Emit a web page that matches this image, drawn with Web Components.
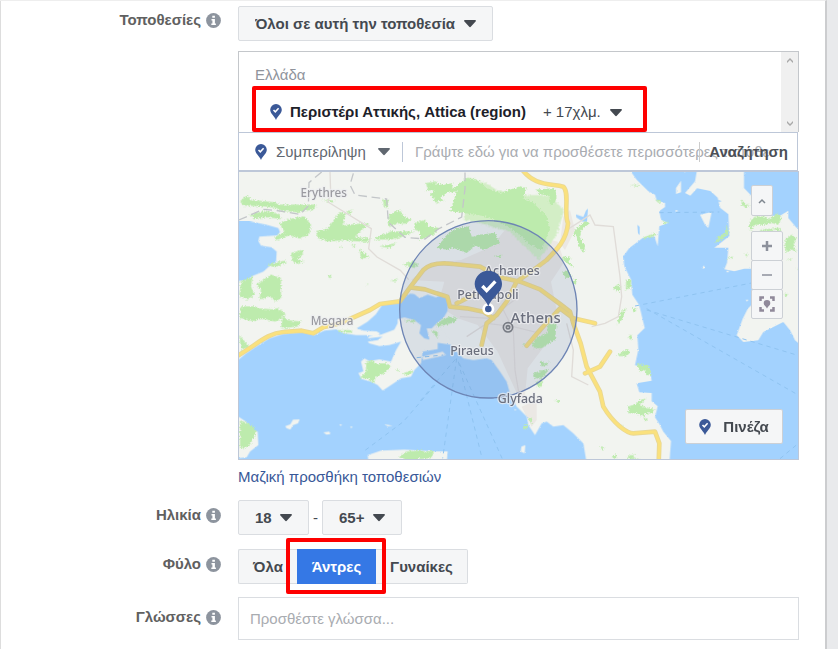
<!DOCTYPE html>
<html lang="el"><head><meta charset="utf-8"><title>Κοινό</title>
<style>
html{background:#e9eaec}
body{margin:0;min-height:100vh;font:15px/20px "Liberation Sans",Arial,sans-serif;color:#444950;overflow:hidden}
</style></head><body>
<audience-form></audience-form>
<script>
const define=(name,html,setup)=>{
  const t=document.createElement('template');t.innerHTML=html;
  customElements.define(name,class extends HTMLElement{
    constructor(){super();this.attachShadow({mode:'open'}).append(t.content.cloneNode(true));}
    connectedCallback(){if(setup)setup(this,this.shadowRoot);}
  });
};

define('pin-icon',`<style>:host{display:inline-flex;flex:none}</style>
<svg width="12" height="16" viewBox="0 0 12 16" aria-hidden="true"><path d="M6 0a5.8 5.8 0 0 1 5.8 5.8C11.8 9.500 8 11.500 6 16 4 11.500.2 9.500.2 5.800A5.800 5.800 0 0 1 6 0z" fill="#3b5998"/><path d="M3.500 5.900l1.800 1.900 3.300-3.600" fill="none" stroke="#fff" stroke-width="1.500"/></svg>`);

define('info-icon',`<style>:host{display:inline-flex;flex:none}</style>
<svg width="15" height="15" viewBox="0 0 15 15" role="img" aria-label="Πληροφορίες"><circle cx="7.500" cy="7.500" r="7.400" fill="#8d949e"/><path d="M6.300 2.700h2.600v2.100H6.300zM5.500 6h3.400v4.600h1v1.500H5.300v-1.500h1.100V7.400h-.9z" fill="#fff"/></svg>`);

define('form-row',`<style>
:host{display:grid;grid-template-columns:221px minmax(0,1fr);column-gap:17px;align-items:start}
.label{display:flex;justify-content:flex-end;align-items:center;gap:5px;font-weight:bold;color:#606060;padding-top:var(--label-top,5px)}
</style><div class="label"><slot name="label"></slot><info-icon></info-icon></div><div><slot></slot></div>`);

define('drop-down',`<style>
:host{display:inline-grid;align-items:center;background:var(--bg,#f5f6f7);border:var(--border,1px solid #dadde1);border-radius:2px;box-sizing:border-box;height:var(--height,35px)}
select{grid-area:1/1;appearance:none;border:0;background:none;margin:0;height:100%;font:inherit;font-weight:var(--weight,bold);color:inherit;padding:0 var(--right,36px) 0 var(--left,16px);outline-offset:-2px}
svg{grid-area:1/1;justify-self:end;margin-right:var(--arrow-right,15px);pointer-events:none}
</style><select></select><svg width="14" height="9" viewBox="0 0 14 9" aria-hidden="true"><path d="M1.800 1h10.400a.8.8 0 0 1 .6 1.300L8 7.600a1.300 1.300 0 0 1-2 0L1.200 2.300A.8.8 0 0 1 1.800 1z" fill="var(--arrow,#444950)"/></svg>`,(h,r)=>{
  const s=r.querySelector('select');s.setAttribute('aria-label',h.getAttribute('label'));
  s.replaceChildren(...h.getAttribute('options').split('|').map(o=>new Option(o)));
});

define('location-list',`<style>
:host{display:flex;border:1px solid #c4c7cb;border-bottom:0;height:80px;box-sizing:content-box}
.items{flex:1;min-width:0;padding:13px 0 0 16px}
.country{color:#90949c}
.place{position:relative;display:flex;align-items:center;width:max-content;margin-top:17px;padding-left:15px;gap:8px;height:20px;color:#1d2129}
.place strong{font-weight:bold}
drop-down{--bg:none;--border:0;--weight:normal;--height:24px;--left:9px;--right:30px;--arrow-right:8px;color:#444950}
.place::after{content:"";position:absolute;inset:-16px -16px -10px -3px;border:4px solid #fe0000;border-radius:2px;pointer-events:none}
.bar{display:flex;flex-direction:column;justify-content:space-between;align-items:center;width:17px;padding:5px 0;box-sizing:border-box;background:#f0f0f0}
</style>
<div class="items"><div class="country">Ελλάδα</div>
<div class="place"><pin-icon></pin-icon><strong>Περιστέρι Αττικής, Attica (region)</strong><drop-down label="Ακτίνα" options="+ 17χλμ."></drop-down></div></div>
<div class="bar" aria-hidden="true"><svg width="8" height="7"><path d="M1 6V4l3-3 3 3v2L4 3z" fill="#a9a9a9"/></svg><svg width="8" height="7"><path d="M1 1v2l3 3 3-3V1L4 4z" fill="#a9a9a9"/></svg></div>`);

define('location-search',`<style>
:host{display:flex;align-items:center;border:1px solid #bdc7d8;height:37px;margin-right:1px;padding-left:16px;background:#fff}
drop-down{--bg:none;--border:0;--weight:normal;--height:36px;--left:9px;--right:36px;--arrow-right:11px;--arrow:#606770;color:#606770}
.rule{width:1px;height:20px;background:#bdc7d8;flex:none}
.field{display:grid;flex:1;min-width:0;align-items:center}
input{grid-area:1/1;border:0;background:none;padding:0 10px 0 12px;min-width:0;height:36px;font:inherit}
input::placeholder{color:#a9acb1;opacity:1}
button{grid-area:1/1;justify-self:end;border:0;border-left:1px solid #ccc;background:none;font:inherit;font-weight:bold;color:#4b4f56;padding:0 9px}
</style><pin-icon></pin-icon><drop-down label="Τύπος" options="Συμπερίληψη"></drop-down><span class="rule"></span>
<div class="field"><input aria-label="Τοποθεσία" placeholder="Γράψτε εδώ για να προσθέσετε περισσότερες τοποθε"><button type="button">Αναζήτηση</button></div>`);

define('map-button',`<style>
:host{display:block}
button{display:flex;align-items:center;justify-content:center;gap:12px;width:100%;height:100%;padding:0;border:1px solid #ccd0d5;border-radius:var(--radius,2px);background:#f5f6f7;font:inherit;font-weight:bold;color:#444950}
</style><button type="button"><slot></slot></button>`,(h,r)=>{const l=h.getAttribute('label');if(l)r.querySelector('button').setAttribute('aria-label',l);});

define('area-map',`<style>
:host{display:block;position:relative;height:287px;border:1px solid #bdc7d8;overflow:hidden;background:#f2f4f0}
.map{display:block;width:100%;height:100%}
.controls{position:absolute;right:15px;top:13px;width:32px}
.controls map-button{height:30px;margin-bottom:-1px}
.controls .up{width:22px;height:31px;margin-bottom:15px}
.pin{position:absolute;right:15px;bottom:15px;width:98px;height:35px}
text{font-family:"Noto Sans","Open Sans",sans-serif;font-weight:500;paint-order:stroke;stroke:#eceef0;stroke-opacity:.75;stroke-width:7;stroke-linejoin:round}
</style>
<svg class="map" viewBox="717 516 1677 861" preserveAspectRatio="xMidYMid slice" role="img" aria-label="Χάρτης Αττικής">
<defs><filter id="rough" x="-5%" y="-5%" width="110%" height="110%"><feTurbulence type="fractalNoise" baseFrequency=".2" numOctaves="2" seed="4"/><feDisplacementMap in="SourceGraphic" scale="13" xChannelSelector="R" yChannelSelector="G"/></filter>
<filter id="coast" x="-5%" y="-5%" width="110%" height="110%"><feTurbulence type="fractalNoise" baseFrequency=".2" numOctaves="2" seed="8"/><feDisplacementMap in="SourceGraphic" scale="6" xChannelSelector="R" yChannelSelector="G"/></filter></defs>
<path fill="#f2f4f0" d="M700 500h1720v900H700z"/>
<g fill="#ebe8e4"><path d="M1233 840l60-50 90-10 90-40 80-95 50 10 30 60 40 10 20 60-40 60 20 100-30 80-60 80-10 100-20-20-60-130-60-80-60-20-60-40 20-70z"/><path d="M1680 730l10-80 20-20 15 60-30 60zM1565 1220l45-20v60l-15 20z"/></g>
<g filter="url(#coast)">
<g fill="#a3d2fe">
<path d="M700 664l48 0 50 10 37 10 5 12-8 10-54 4-3 13 8 14 32 5 15 13-2 32-18 10-20 18-30 12-20 13-40 5z"/>
<path d="M700 1092L738 1060 768 1040 808 1015 848 1002 908 996 943 1005 973 992 1008 988 1033 1000 1068 1005 1100 1005 1130 1010 1140 1000 1130 994 1090 992 1070 985 1103 965 1128 942 1148 912 1198 904 1218 889 1230 881 1243 882 1258 894 1283 884 1308 892 1330 884 1345 899 1342 934 1330 954 1310 970 1290 990 1290 1010 1310 1025 1350 1030 1370 1055 1390 1075 1420 1080 1460 1075 1475 1080 1500 1115 1520 1145 1530 1180 1550 1220 1580 1250 1585 1275 1605 1305 1625 1270 1640 1265 1660 1280 1690 1275 1720 1300 1750 1330 1760 1390 700 1390z"/>
<path transform="translate(1800 504)" d="M85 0l25 35 35 35 20 10 5 17 25 8v12l-17 12 5 26 21 10-26 10-5 60-10-30-35 5-40 30-18 25 3 30 20 40 4 45 20 30 5 20 12 50-22 22 3 43-10 47 42 8 8 38-45 8 8 27 37 2v25l18 15-8 33 13 20 12 23 23 28-6 80h420V0z"/>
</g>
<g fill="#f2f4f0">
<path transform="translate(708 930)" d="M375 155l10-10 15 8 30-5 35 7 15-35 15-25-35 10-30 3-30-8-5-5 30-5 15-10-45 5 5-6 35-5 40-15 10-20 0-12 20-5 30 8 20 15-5 25 15 15 40 10v22l-45 8-5 35-20 20-10 20-30 5-30 20-25 17-15-17-20-10-28-8-10-18 15-5zM572 55l40 0 40 50-70-10zM560 140l60-15 10 10-70 15zM0 315l30 20 15 25 20 5 2 40-25 20-10 17-40 4zM148 348l15-5 8-14 20-1-5 12-15 5-8 14-12-5zM262 367l18-2 3 7-12 2zM342 350l8 0-4 5zM310 343l8 0-4 5zM445 343l25 4-15 2zM395 435l40-13 70-3 90 5 40 0-5 60H400z"/>
<path transform="translate(1800 504)" d="M292 0l-7 40-30 35 16 8 20-22 40 8 22 20 7 30 25 20 3 65-45 35 42 0-4 45-8 20 30 6 30-8 25 0 5 100-20 20-15 30-18 50 20 20 45-5 15-25 60-30 20 25 15 30 30 25V172l-25 8-25-30 0-22-25 15-70 0V100L432 60V0zM228 60l15-22v35l-15 5zM300 140l35-8-10 48-10-10zM227 125l8 4-8 3zM305 300l8-8 0 10zM250 8h8l-3 6zM380 308h6v5h-6zM437 395l8 0-4 6zM355 95l10 5-8 2z"/>
<path transform="translate(1260 930)" d="M304 410l12-5-2 25-12-5zM283 297l7 2-6 3z"/>
</g></g>
<path fill="#a3d2fe" d="M1728 643l22 8 8-20 6-5-3 40-14-2-18-12zM1912 675l7 5v25l-5-5z"/>
<g fill="#d3eec6" filter="url(#rough)"><path d="M1400 530l60 20 30 20 80 15 90 0 12 25 20 20-20 70-55 80-90-85-100-30-35-5 10-60z"/></g>
<g fill="#bdebad" filter="url(#rough)">
<g transform="translate(708 504)"><path d="M12 100l20-18 15 14 65 6 20 8 60 0 50 0-10 15-50 8-50-5-10-8-40-5-60-2zM40 140l50-12 40 10 5 15-40-5-40 3zM130 165l30-12 45-8 20 25-5 30-30 12-30-10-40 15-5-10 30-15zM240 190l35-8 35-50 20 5-10 35 50-5 30 0-30 25-10 15 45 5-10 10-70-5-50 3-30-10zM255 95l40 3-5 6zM330 130l20-5-10 15zM440 95l18 0-4 25-10-5zM460 140l30-15 15 20 20 10-15 12-30 0-20 10-5-10zM535 165l35-10-15 35-20-5zM415 210l50-20 70 0-30 15-40 10-50 0zM570 45l30-5v25l-25-2zM590 90l15 0v20zM165 255l35-10 0 15-15 15 20 5-20 8-15-8zM95 290l50-12 8 5-40 15zM15 340l35-15-5 30 10 25-20 15-25-10zM60 350l45-30 30 10 0 60-15 10-20-15-30 10 5-30zM15 415l40 0 30 15 40-10 25 20-30 10-60 5-50-5zM370 240l15 15 15 12-25 5zM345 230l15 3-5 5zM310 235l10 3-5 4zM430 235l50-10-20 15zM500 290l30-10 20 10-15 10zM465 340l20-10-5 10zM275 325l12-5-5 12zM390 347l7 0-3 4z"/></g>
<g transform="translate(1260 504)"><path d="M20 70l20-25 30 5 30-5-5 20 20-15 25-20 30 5 30 25 40 15 60-20 20 5-10 30 30 15 40 40 10 40-25 60-35-15-30-30-45-30-60-25-65-10-40-5 20-60-30 5-20 15 15 10-25-5-20-15 15-15-30 5zM345 65l60-5 5 30-12 22-12-6 4-22-30-5zM0 160l25 5-5 10 40 5-20 20-40 15zM50 240l30-40 30-20 35-5 20 60-25 20-40-15-20 5zM135 215l40-15 50-5 15 30-50 20zM220 265l25-5-5 8zM465 185l30-25 15 5-25 20-5 20 15 30-5 20-15-20-5-30-10-5zM430 265l25 5-10 10 20 20-15-8-20-15zM425 315l20-10 10 20-15 5zM460 335l10 0-2 15-10-5zM580 360l20-8v20z"/></g>
<g transform="translate(1800 504)"><path d="M90 50l30 2-5 5zM165 95l15 3 5 8-10-2zM185 158l20 5-10 6zM128 208l35-12 5 6-35 10zM425 95l12 15 12-2-10 12-14-10zM345 225l10-20 20-10 5-25 6 25-20 20zM380 270l20-5-5 8zM432 257l12 2-4 6zM450 160l15-15 30 0 10 10 30-20 10 15-10 20-20-5-20 5-30 0-10 15-8-5zM555 215l20-15 15 10-10 20 10 20-15-5-15 10-5-20zM480 185l60-5 0 8-50 3zM560 275l15-5-5 8zM550 380l15-5-5 12zM40 360l15-12 10 10-15 12zM78 335l15 0v25l-15 5zM65 430l15-8-10 15zM98 422l12 5-8 5zM590 300l6 0v8z"/></g>
<g transform="translate(708 930)"><path d="M12 5l60-10 65 5 0 25-20 10-40-10-25 8-30-5zM140 15l15 15 40 5-10 15-50 5zM305 60l40 0 5 8-40 0zM390 155l25-5 0 10 35 0 15 10-20 20-25 10-5 20-20-15-25 0 20-20zM480 177l12 3-6 4zM500 190l30-10-5 12-20 4zM505 30l35 0-5 8-25-4zM12 330l35 15 15 20-15 30-10 15-25 5zM490 440l20-15 50-5 5 15-30 20-30-5zM570 425l25 0-8 18zM10 75l30 35-25 10zM585 60l20 5v20z"/></g>
<g transform="translate(1260 930)"><path d="M45 45l20-15 20-10 25 5-5 12-50 12zM335 100l20-20 25-10 5-30 25 0-5 50-20 10-20 15-25-2zM360 150l15 10 15-5-10 10-15 5zM340 190l25-8 20-5-10 20-15 10-20-5zM350 215l20-5-5 20-15 0zM310 345l15 2-5 12-10-5zM325 322l12 2-3 18zM540 410l15 5-8 4zM575 440l15-8-2 15zM0 425l40 0-10 20-30 2zM400 270l20 2-4 5zM305 105l12-4-3 6z"/></g>
<g transform="translate(1800 930)"><path d="M60 10l15-15-5 30-20 20zM95-5l15 0-8 12zM50 138l20-15 15-5 5 10-10 10zM85 75l10 0 0 15-8-5zM110 160l20 5 15 0 10 30-15 0-5-15-15 5zM85 290l25-10 10-10 20-5-20 20 25 10 20 0-10 15-20 0-5 10-20-10-25 0zM130 322l15 5-10 8zM60 345l10 0 0 8zM35 440l15-6-5 12zM80 440l25-8-5 10 20 5-30 0zM0 410l10 0-6 6z"/></g>
</g>
<g fill="none" stroke="#8fc3f0" stroke-width="3" stroke-dasharray="13 12"><path d="M1305 1155l-95 110-120 90M1370 1075l-42 300M1375 1085l70 285M1378 1090l135 300M1366 1078l-110 130M1978 638l180-2M1905 918l365-72M1940 930l450 135M1940 926l460 262M2340 1376l60-50M1250 1073l80-8"/></g>
<g fill="none" stroke="#c3c6c9" stroke-width="4" stroke-dasharray="26 14"><path d="M965 516l-38 32-2 70-25 25-60-10-50-5-80 35M1060 520l-10 35 15 30 95 12 5 70 50 45 60 5 40-30 70-36 10-85 0-60"/></g>
<g fill="none" stroke="#e0dcd8" stroke-width="4"><path d="M990 516l2 60-8 30 130 80-8 60 25 25 70 40 25 28M1700 690l40-25 30-20 15 30 55 5 20 150 5 60-10 60-40 20-40 10M1560 1200l-15-90-5-120-30-60M1400 1010l60-40 80 10 80 20 50-60M1700 970l20 80-5 80 50 25M1380 950l90 5 80-60"/></g>
<g fill="none" stroke-linejoin="round" stroke-linecap="round"><path stroke="#e8d794" stroke-width="14" d="M708 1070C770 1035 800 1000 850 996L905 992 940 1000 970 982 1020 970 1110 930 1140 912 1200 904 1230 862 1270 810C1290 790 1320 787 1360 792L1440 800 1500 832 1560 845 1620 868 1680 912 1710 935 1720 970 1742 1030 1760 1100 1800 1175 1810 1220C1840 1270 1880 1300 1900 1300L1965 1295 1978 1330 1976 1390M1560 500C1600 560 1650 550 1690 560 1710 580 1690 640 1704 670 1700 720 1670 750 1640 780L1600 810 1550 845 1520 905 1490 945 1460 970 1445 1035M1230 862L1275 868 1310 880 1342 890 1350 920 1400 925 1450 935 1480 955M1370 910l50-25M1580 1037L1620 990 1680 925 1720 955 1785 970M1755 1120L1800 1100 1830 1055"/>
<path stroke="#fae17d" stroke-width="9" d="M708 1070C770 1035 800 1000 850 996L905 992 940 1000 970 982 1020 970 1110 930 1140 912 1200 904 1230 862 1270 810C1290 790 1320 787 1360 792L1440 800 1500 832 1560 845 1620 868 1680 912 1710 935 1720 970 1742 1030 1760 1100 1800 1175 1810 1220C1840 1270 1880 1300 1900 1300L1965 1295 1978 1330 1976 1390M1560 500C1600 560 1650 550 1690 560 1710 580 1690 640 1704 670 1700 720 1670 750 1640 780L1600 810 1550 845 1520 905 1490 945 1460 970 1445 1035M1230 862L1275 868 1310 880 1342 890 1350 920 1400 925 1450 935 1480 955M1370 910l50-25M1580 1037L1620 990 1680 925 1720 955 1785 970M1755 1120L1800 1100 1830 1055"/></g>
<circle cx="1465" cy="928" r="266" fill="#3b5998" fill-opacity=".13" stroke="#6d84b4" stroke-width="4"/>
<g text-anchor="middle"><g fill="#9a9aa0" font-size="35"><text x="971" y="592">Erythres</text><text x="996" y="976">Megara</text></g>
<g fill="#6b6f7d" font-size="37"><text x="1537" y="824">Acharnes</text><text x="1464" y="897">Petroupoli</text><text x="1416" y="1066">Piraeus</text><text x="1561" y="1210">Glyfada</text><text x="1607" y="970" font-size="45">Athens</text></g></g>
<g fill="none" stroke="#777b83"><circle cx="1524" cy="982" r="14" stroke-width="5"/><circle cx="1524" cy="982" r="5" stroke-width="5"/></g>
<circle cx="1465" cy="927" r="14" fill="#3b5998" stroke="#fff" stroke-width="8"/>
<path d="M1465 812c23 0 41 18 41 40 0 27-28 36-41 67-13-31-41-40-41-67 0-22 18-40 41-40z" fill="#3b5998"/><path d="M1447 858l13 14 26-28" fill="none" stroke="#fff" stroke-width="10"/>
</svg>
<div class="controls">
<map-button class="up" label="Σύμπτυξη"><svg width="8" height="6"><path d="M1 5l3-3 3 3" fill="none" stroke="#7f8790" stroke-width="1.500"/></svg></map-button>
<map-button label="Μεγέθυνση"><svg width="10" height="10"><path d="M5 0v10M0 5h10" stroke="#8d919c" stroke-width="2.500"/></svg></map-button>
<map-button label="Σμίκρυνση"><svg width="10" height="10"><path d="M0 5h10" stroke="#8d919c" stroke-width="1.500"/></svg></map-button>
<map-button label="Προσαρμογή"><svg width="16" height="16" viewBox="0 0 16 16"><path d="M1.500 5V1.500H5M11 1.500h3.500V5M14.500 11v3.500H11M5 14.500H1.500V11" fill="none" stroke="#90899a" stroke-width="2.500"/><path d="M8 4a3.300 3.300 0 0 1 3.300 3.300C11.300 9.500 9 10 8 12.500 7 10 4.700 9.500 4.700 7.300A3.300 3.300 0 0 1 8 4z" fill="#90899a"/></svg></map-button></div>
<map-button class="pin"><pin-icon></pin-icon><span>Πινέζα</span></map-button>`);

define('gender-picker',`<style>
:host{display:inline-flex;height:35px}
button{box-sizing:border-box;height:35px;border:1px solid #dadde1;background:#f5f6f7;font:inherit;font-weight:bold;color:#444950;padding:0}
.all{width:59px;border-right:0;border-radius:2px 0 0 2px}
.women{width:92px;border-left:0;border-radius:0 2px 2px 0}
.pick{position:relative;display:flex;width:79px;border:0}
.pick button{width:100%;background:#3578e5;border:0;color:#fff}
.pick::after{content:"";position:absolute;inset:-11px -10px -10px -11px;border:4px solid #fe0000;border-radius:2px;pointer-events:none}
</style><button class="all" type="button" aria-pressed="false">Όλα</button><span class="pick"><button type="button" aria-pressed="true">Άντρες</button></span><button class="women" type="button" aria-pressed="false">Γυναίκες</button>`);

define('audience-form',`<style>
:host{display:block;min-height:100vh;box-sizing:border-box;margin-right:11px;padding:5px 26px 9px 0;background:#fff;border-top:1px solid #eee;border-right:2px solid #cccdcf;box-shadow:inset 1px 0 #ddd}
form{display:flex;flex-direction:column;gap:14px}
.block{margin-top:10px}
a{display:block;margin-top:8px;line-height:18px;color:#385898;text-decoration:none}
.ages{display:flex;align-items:center;gap:4px}
.lang{display:block;box-sizing:border-box;width:100%;height:43px;border:1px solid #dadde1;background:#fff;font:inherit;padding:0 11px}
.lang::placeholder{color:#a9acb1;opacity:1}
.first{--label-top:4px}.last{--label-top:10px}
.gap{margin-bottom:-1px}
</style><form>
<form-row class="first"><span slot="label">Τοποθεσίες</span>
<drop-down label="Τοποθεσίες" options="Όλοι σε αυτή την τοποθεσία"></drop-down>
<div class="block"><location-list></location-list><location-search></location-search><area-map></area-map></div>
<a href="#bulk">Μαζική προσθήκη τοποθεσιών</a></form-row>
<form-row><span slot="label">Ηλικία</span><div class="ages"><drop-down label="Από" options="18"></drop-down><span>-</span><drop-down label="Έως" options="65+"></drop-down></div></form-row>
<form-row class="gap"><span slot="label">Φύλο</span><gender-picker role="group" aria-label="Φύλο"></gender-picker></form-row>
<form-row class="last"><label slot="label" for="lang">Γλώσσες</label><input class="lang" id="lang" aria-label="Γλώσσες" placeholder="Προσθέστε γλώσσα..."></form-row>
</form>`);
</script></body></html>
